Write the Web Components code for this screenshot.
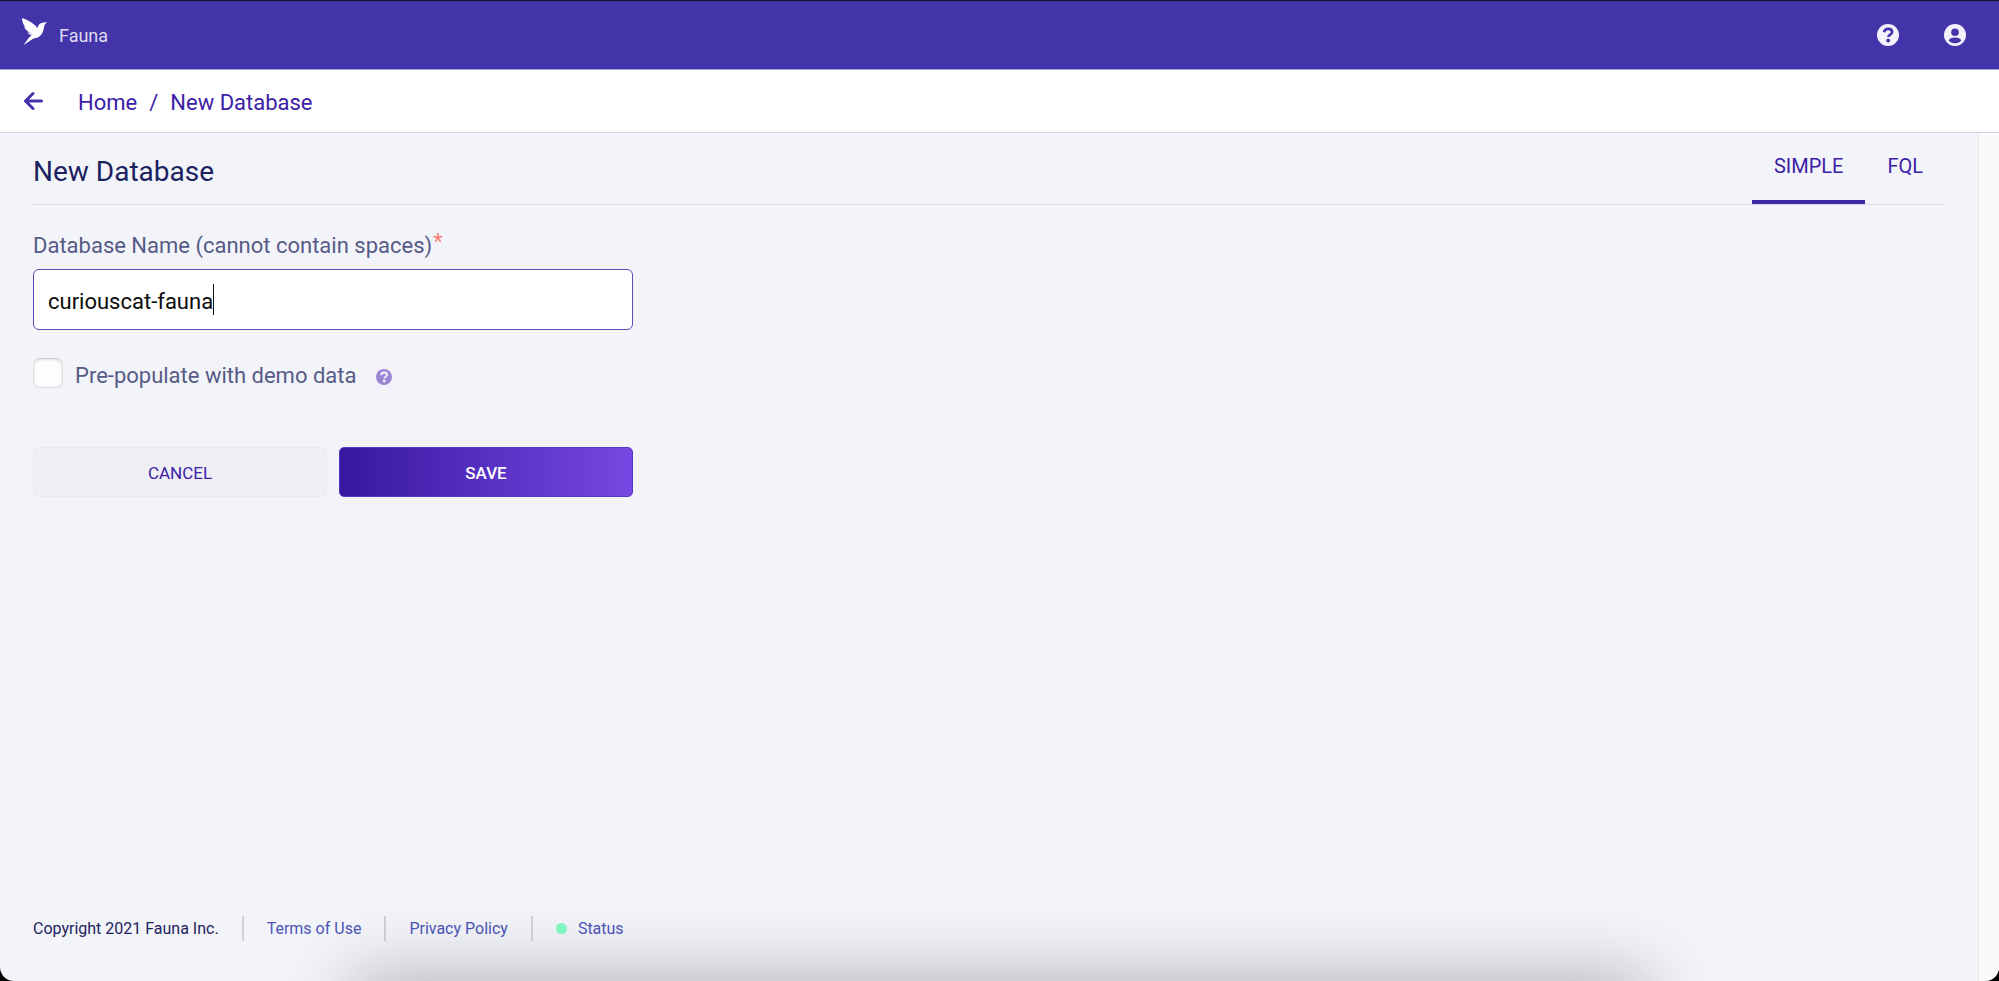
<!DOCTYPE html>
<html lang="en">
<head>
<meta charset="utf-8">
<title>New Database - Fauna</title>
<style>
html, body { margin: 0; height: 100%; background: #000; }
body { font-family: Roboto, "Liberation Sans", sans-serif; color: #1c2260; }
</style>
</head>
<body>
<fauna-app></fauna-app>
<script>
const define = (name, markup, setup) => {
  const template = document.createElement('template');
  template.innerHTML = markup;
  customElements.define(name, class extends HTMLElement {
    constructor() {
      super();
      this.attachShadow({ mode: 'open' }).append(template.content.cloneNode(true));
    }
    connectedCallback() { if (setup) setup(this, this.shadowRoot); }
  });
};

define('help-icon', `
<style>
:host { display: block; width: 22px; height: 22px; }
svg { display: block; width: 100%; height: 100%; }
</style>
<svg viewBox="0 0 22 22" aria-hidden="true">
  <circle cx="11" cy="11" r="11" fill="currentColor"/>
  <path d="M7.1 8.300C7.400 6.100 8.900 4.900 11.100 4.900c2.300 0 4 1.200 4 3.100 0 2.700-3.700 2.600-3.700 5.100" fill="none" stroke="var(--mark)" stroke-width="2.600"/>
  <circle cx="11.2" cy="16.500" r="1.900" fill="var(--mark)"/>
</svg>`);

define('fauna-header', `
<style>
:host { display: flex; align-items: center; height: 69px; padding: 0 33px 0 22px; background: #4434a9; color: #f3f2fb; box-sizing: border-box; border-bottom: 1px solid #a9a2d6; }
a { color: inherit; text-decoration: none; display: flex; }
.brand { gap: 11px; font-size: 18px; line-height: 24px; align-items: flex-end; flex: 1; padding-bottom: 4px; color: #dfdcf2; }
.bird { width: 26px; height: 27px; margin-bottom: 3px; }
nav { display: flex; gap: 45px; }
help-icon { --mark: #4434a9; }
.icon { width: 22px; height: 22px; }
</style>
<a class="brand" href="#"><svg class="bird" viewBox="0 0 78 81" aria-hidden="true"><path fill="#fff" d="M0 0C14 5 26 11 34 18C40 22 44 26 46 31C48 21 54 14 62 14L75 12L67 22C65 37 62 48 53 55C46 61 39 61 33 62L5 81C10 73 17 65 22 58L29 52C23 50 18 47 16 43L23 45C14 39 8 32 6 25L11 28C3 20 1 11 0 0Z"/><path d="M16 41C22 45 27 46 31 49" fill="none" stroke="#4434a9" stroke-width="1"/></svg><span>Fauna</span></a>
<nav>
  <a href="#" aria-label="Help"><help-icon></help-icon></a>
  <a href="#" aria-label="Account"><svg class="icon" viewBox="0 0 22 22" aria-hidden="true"><circle cx="11" cy="11" r="11" fill="currentColor"/><circle cx="11" cy="8.200" r="3.800" fill="#4434a9"/><ellipse cx="11" cy="16.300" rx="6" ry="2.900" fill="#4434a9"/></svg></a>
</nav>`);

define('fauna-breadcrumb', `
<style>
:host { display: flex; align-items: center; gap: 34px; height: 63px; box-sizing: border-box; padding: 0 24px; background: #fff; border-bottom: 1px solid #d3d0e8; color: #3b20a6; font-size: 22px; line-height: 26px; }
a { color: inherit; text-decoration: none; }
.arrow { display: block; width: 20px; height: 20px; }
ol { display: flex; gap: 12px; list-style: none; margin: 0; padding: 3px 0 0; }
li { display: flex; gap: 12px; }
li + li::before { content: "/"; }
</style>
<a href="#" aria-label="Back"><svg class="arrow" viewBox="0 0 20 20" aria-hidden="true"><path d="M9 2.500L1.500 10l7.500 7.500M2 10h15.500" fill="none" stroke="#4434a9" stroke-width="3" stroke-linecap="round" stroke-linejoin="round"/></svg></a>
<ol><li><a href="#">Home</a></li><li><a href="#">New Database</a></li></ol>`);

define('page-title', `
<style>
:host { display: flex; justify-content: space-between; height: 72px; border-bottom: 1px solid #d9d9ea; box-sizing: border-box; }
h1 { margin: 0; padding-top: 22px; font-size: 28px; line-height: 34px; font-weight: 400; }
nav { display: flex; }
</style>
<h1><slot></slot></h1><nav><slot name="tabs"></slot></nav>`);

define('page-tab', `
<style>
:host { display: block; }
a { display: block; box-sizing: border-box; height: 71px; padding: 20px 22px 0; font-size: 20px; line-height: 26px; color: #3b20a6; text-decoration: none; }
:host([active]) a { border-bottom: 4px solid #3e2aa8; }
</style>
<a href="#"><slot></slot></a>`);

define('database-form', `
<style>
:host { display: block; padding-top: 27px; max-width: 600px; font-size: 22px; line-height: 28px; color: #565b86; }
form { display: flex; flex-direction: column; }
.name { display: flex; gap: 1px; margin-bottom: 9px; }
sup { color: #f38275; font-size: 22px; line-height: 20px; }
.field { position: relative; display: flex; }
input[type=text] { flex: 1; min-width: 0; box-sizing: border-box; height: 61px; padding: 4px 14px 0; border: 1px solid #5a4bb5; border-radius: 6px; background: #fff; color: #0c0c0c; font: inherit; outline: none; }
.caret { position: absolute; top: 15px; width: 1px; height: 31px; background: #111; }
.check { display: flex; align-items: center; gap: 12px; margin-top: 28px; height: 30px; }
input[type=checkbox] { appearance: none; width: 30px; height: 30px; margin: 0; border: 1px solid #dcdde1; border-top-color: #cbccd0; border-radius: 7px; background: #fdfdfe; box-shadow: inset 0 1px 3px #0002; }
.check label { padding-top: 6px; }
help-icon { width: 16px; height: 16px; margin: 8px 0 0 8px; color: #9a86d3; --mark: #f4f5fa; }
.actions { display: grid; grid-template-columns: 1fr 1fr; gap: 12px; margin-top: 59px; }
button { height: 50px; border-radius: 5px; border: 1px solid #e9eaf0; background: #eeeff5; color: #3b20a6; font: inherit; font-size: 17px; padding: 2px 0 0; }
.save { border-color: #5635c2; background: linear-gradient(90deg, #37179f, #7748e3); color: #fff; font-weight: 500; }
</style>
<form>
  <div class="name"><label for="name">Database Name (cannot contain spaces)</label><sup>*</sup></div>
  <div class="field"><input id="name" type="text" value="curiouscat-fauna" spellcheck="false"><span class="caret"></span></div>
  <div class="check"><input id="demo" type="checkbox"><label for="demo">Pre-populate with demo data</label><help-icon></help-icon></div>
  <div class="actions"><button type="button">CANCEL</button><button type="button" class="save">SAVE</button></div>
</form>`, (host, root) => {
  const input = root.querySelector('#name');
  const caret = root.querySelector('.caret');
  const pen = document.createElement('canvas').getContext('2d');
  const place = () => {
    const s = getComputedStyle(input);
    pen.font = s.fontSize + ' ' + s.fontFamily;
    caret.style.left = Math.round(15 + pen.measureText(input.value).width) + 'px';
  };
  input.addEventListener('input', place);
  place();
});

define('fauna-footer', `
<style>
:host { display: flex; align-items: center; margin-top: auto; padding-bottom: 40px; font-size: 16px; line-height: 25px; }
span, a { padding: 0 23px; }
span { padding-left: 0; }
a { color: #4b55b8; text-decoration: none; border-left: 2px solid #d0d2d8; display: flex; align-items: center; gap: 11px; }
.status::before { content: ""; width: 11px; height: 11px; border-radius: 50%; background: #84fac6; }
</style>
<span>Copyright 2021 Fauna Inc.</span><a href="#">Terms of Use</a><a href="#">Privacy Policy</a><a class="status" href="#">Status</a>`);

define('fauna-app', `
<style>
:host { position: relative; display: flex; flex-direction: column; min-height: 100vh; box-sizing: border-box; border-top: 1px solid #15102f; }
.window { flex: 1; display: flex; flex-direction: column; position: relative; overflow: hidden; background: #f3f4f9; border-radius: 0 0 14px 14px; }
.body { flex: 1; display: flex; }
main { flex: 1; display: flex; flex-direction: column; padding: 0 33px; }
.gutter { width: 20px; background: #fafafb; border-left: 1px solid #e5e6ea; }
.shade { position: absolute; left: 18%; right: 18%; bottom: -40px; height: 40px; box-shadow: 0 8px 72px 8px #0005; pointer-events: none; }
</style>
<div class="window">
  <fauna-header></fauna-header>
  <fauna-breadcrumb></fauna-breadcrumb>
  <div class="body">
    <main>
      <page-title>New Database<page-tab slot="tabs" active>SIMPLE</page-tab><page-tab slot="tabs">FQL</page-tab></page-title>
      <database-form></database-form>
      <fauna-footer></fauna-footer>
    </main>
    <div class="gutter"></div>
  </div>
  <div class="shade"></div>
</div>`);
</script>
</body>
</html>
